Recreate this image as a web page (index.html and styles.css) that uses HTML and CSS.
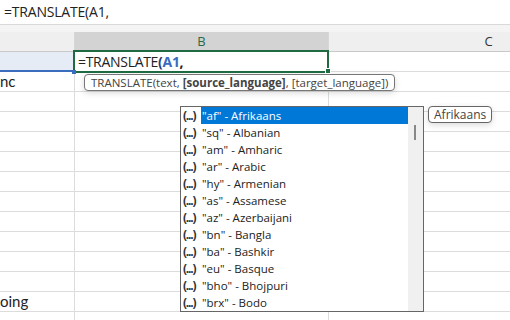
FILE: index.html
```html
<!DOCTYPE html>
<html lang="en">
<head>
  <meta charset="UTF-8">
  <title>TRANSLATE</title>
  <link rel="stylesheet" href="styles.css">
</head>
<body>
  <div class="app">
    <div class="formula-bar">=TRANSLATE(A1,</div>
    <div class="band"></div>

    <div class="grid">
      <div class="hd">&nbsp;</div>
      <div class="hd sel">B</div>
      <div class="hd">C</div>

      <div class="cell ref"><span class="ref-handle"></span></div>
      <div class="cell edit">
        <span class="f">=TRANSLATE</span><span class="paren">(</span><span class="arg">A1</span><span class="comma">,</span>
        <span class="fill-handle"></span>
      </div>
      <div class="cell"></div>

      <div class="cell txt">nc</div><div class="cell"></div><div class="cell"></div>
      <div class="cell"></div><div class="cell"></div><div class="cell"></div>
      <div class="cell"></div><div class="cell"></div><div class="cell"></div>
      <div class="cell"></div><div class="cell"></div><div class="cell"></div>
      <div class="cell"></div><div class="cell"></div><div class="cell"></div>
      <div class="cell"></div><div class="cell"></div><div class="cell"></div>
      <div class="cell"></div><div class="cell"></div><div class="cell"></div>
      <div class="cell"></div><div class="cell"></div><div class="cell"></div>
      <div class="cell"></div><div class="cell"></div><div class="cell"></div>
      <div class="cell"></div><div class="cell"></div><div class="cell"></div>
      <div class="cell"></div><div class="cell"></div><div class="cell"></div>
      <div class="cell txt">oing</div><div class="cell"></div><div class="cell"></div>
      <div class="cell"></div><div class="cell"></div><div class="cell"></div>
    </div>

    <!-- function signature hint -->
    <div class="hint">TRANSLATE(text, <b>[source_language]</b>, [target_language])</div>

    <!-- autocomplete list -->
    <div class="list">
      <ul class="items">
        <li class="active"><span class="fx">(...)</span><span class="label">"af" - Afrikaans</span></li>
        <li><span class="fx">(...)</span><span class="label">"sq" - Albanian</span></li>
        <li><span class="fx">(...)</span><span class="label">"am" - Amharic</span></li>
        <li><span class="fx">(...)</span><span class="label">"ar" - Arabic</span></li>
        <li><span class="fx">(...)</span><span class="label">"hy" - Armenian</span></li>
        <li><span class="fx">(...)</span><span class="label">"as" - Assamese</span></li>
        <li><span class="fx">(...)</span><span class="label">"az" - Azerbaijani</span></li>
        <li><span class="fx">(...)</span><span class="label">"bn" - Bangla</span></li>
        <li><span class="fx">(...)</span><span class="label">"ba" - Bashkir</span></li>
        <li><span class="fx">(...)</span><span class="label">"eu" - Basque</span></li>
        <li><span class="fx">(...)</span><span class="label">"bho" - Bhojpuri</span></li>
        <li><span class="fx">(...)</span><span class="label">"brx" - Bodo</span></li>
      </ul>
      <div class="scroll"><div class="thumb"></div></div>
    </div>

    <div class="tip">Afrikaans</div>
  </div>
</body>
</html>
```

FILE: styles.css
```css
body {
  margin: 0;
  overflow: hidden;
  background: #fff;
  font-family: 'Open Sans', sans-serif;
  color: #222;
}

.app {
  position: relative;
  width: 510px;
  height: 320px;
  overflow: hidden;
}

.formula-bar {
  height: 24px;
  line-height: 24px;
  padding-left: 4px;
  font-size: 14px;
  letter-spacing: -0.2px;
  border-bottom: 1px solid #d9d9d9;
}

.band {
  height: 7px;
  background: #f4f4f4;
}

.grid {
  display: grid;
  grid-template-columns: 75px 254px 320px;
  grid-auto-rows: 20px;
}

.hd {
  box-sizing: border-box;
  background: #efefef;
  border-bottom: 1px solid #c9c9c9;
  border-right: 1px solid #d6d6d6;
  font-size: 13px;
  line-height: 19px;
  text-align: center;
  color: #333;
}

.hd.sel {
  background: #d3d3d3;
  color: #2a6a48;
}

.cell {
  box-sizing: border-box;
  position: relative;
  border-right: 1px solid #dcdcdc;
  border-bottom: 1px solid #dcdcdc;
}

.cell.txt {
  font-family: 'Lato', sans-serif;
  font-size: 15px;
  line-height: 19px;
  white-space: nowrap;
  overflow: hidden;
}

.cell.ref {
  background: #e6ecf5;
}

.cell.ref::after {
  content: "";
  position: absolute;
  left: 0;
  right: -1px;
  bottom: -1px;
  height: 2px;
  background: #3a6cc0;
}

.ref-handle {
  position: absolute;
  right: -2px;
  bottom: -3px;
  width: 4px;
  height: 4px;
  background: #3a6cc0;
  z-index: 3;
}

.cell.edit {
  z-index: 2;
  padding-left: 3px;
  font-size: 14px;
  line-height: 20px;
  letter-spacing: -0.3px;
  white-space: nowrap;
}

.cell.edit::after {
  content: "";
  position: absolute;
  top: -2px;
  left: -2px;
  right: -1px;
  bottom: -2px;
  border: 2px solid #1f6b41;
  pointer-events: none;
}

.fill-handle {
  position: absolute;
  right: -3px;
  bottom: -3px;
  width: 4px;
  height: 4px;
  background: #1f6b41;
  border: 1px solid #fff;
  z-index: 3;
}

.paren {
  color: #1f3d7a;
  font-weight: 700;
}

.arg {
  color: #3a6cc0;
  font-weight: 700;
}

.comma {
  font-weight: 700;
}

.hint {
  position: absolute;
  left: 84px;
  top: 74px;
  height: 17px;
  box-sizing: border-box;
  padding: 0 6px;
  border: 1px solid #777;
  border-radius: 4px;
  background: #fff;
  box-shadow: 0 2px 6px rgba(0, 0, 0, 0.15);
  font-size: 11.5px;
  line-height: 15px;
  color: #444;
  white-space: nowrap;
}

.list {
  position: absolute;
  left: 180px;
  top: 106px;
  width: 244px;
  height: 206px;
  box-sizing: border-box;
  border: 1px solid #666;
  background: #fff;
  display: flex;
}

.items {
  flex: 1;
  margin: 0;
  padding: 0;
  list-style: none;
}

.items li {
  display: flex;
  height: 17px;
  align-items: center;
  font-size: 11.5px;
}

.fx {
  width: 20px;
  padding-left: 2px;
  box-sizing: border-box;
  font-size: 12px;
  line-height: 17px;
  font-weight: 700;
  color: #333;
  letter-spacing: -1.2px;
  white-space: nowrap;
}

.label {
  flex: 1;
  height: 17px;
  line-height: 17px;
  padding-left: 1px;
}

.active .label {
  background: #0078d7;
  color: #fff;
}

.scroll {
  width: 15px;
  background: #f0f0f0;
  position: relative;
}

.thumb {
  position: absolute;
  left: 6px;
  top: 18px;
  width: 2px;
  height: 15px;
  background: #888;
}

.tip {
  position: absolute;
  left: 428px;
  top: 106px;
  height: 17px;
  box-sizing: border-box;
  padding: 0 5px;
  border: 1px solid #666;
  border-radius: 4px;
  background: #fff;
  box-shadow: 0 2px 6px rgba(0, 0, 0, 0.15);
  font-size: 12px;
  line-height: 15px;
  color: #444;
}
```
